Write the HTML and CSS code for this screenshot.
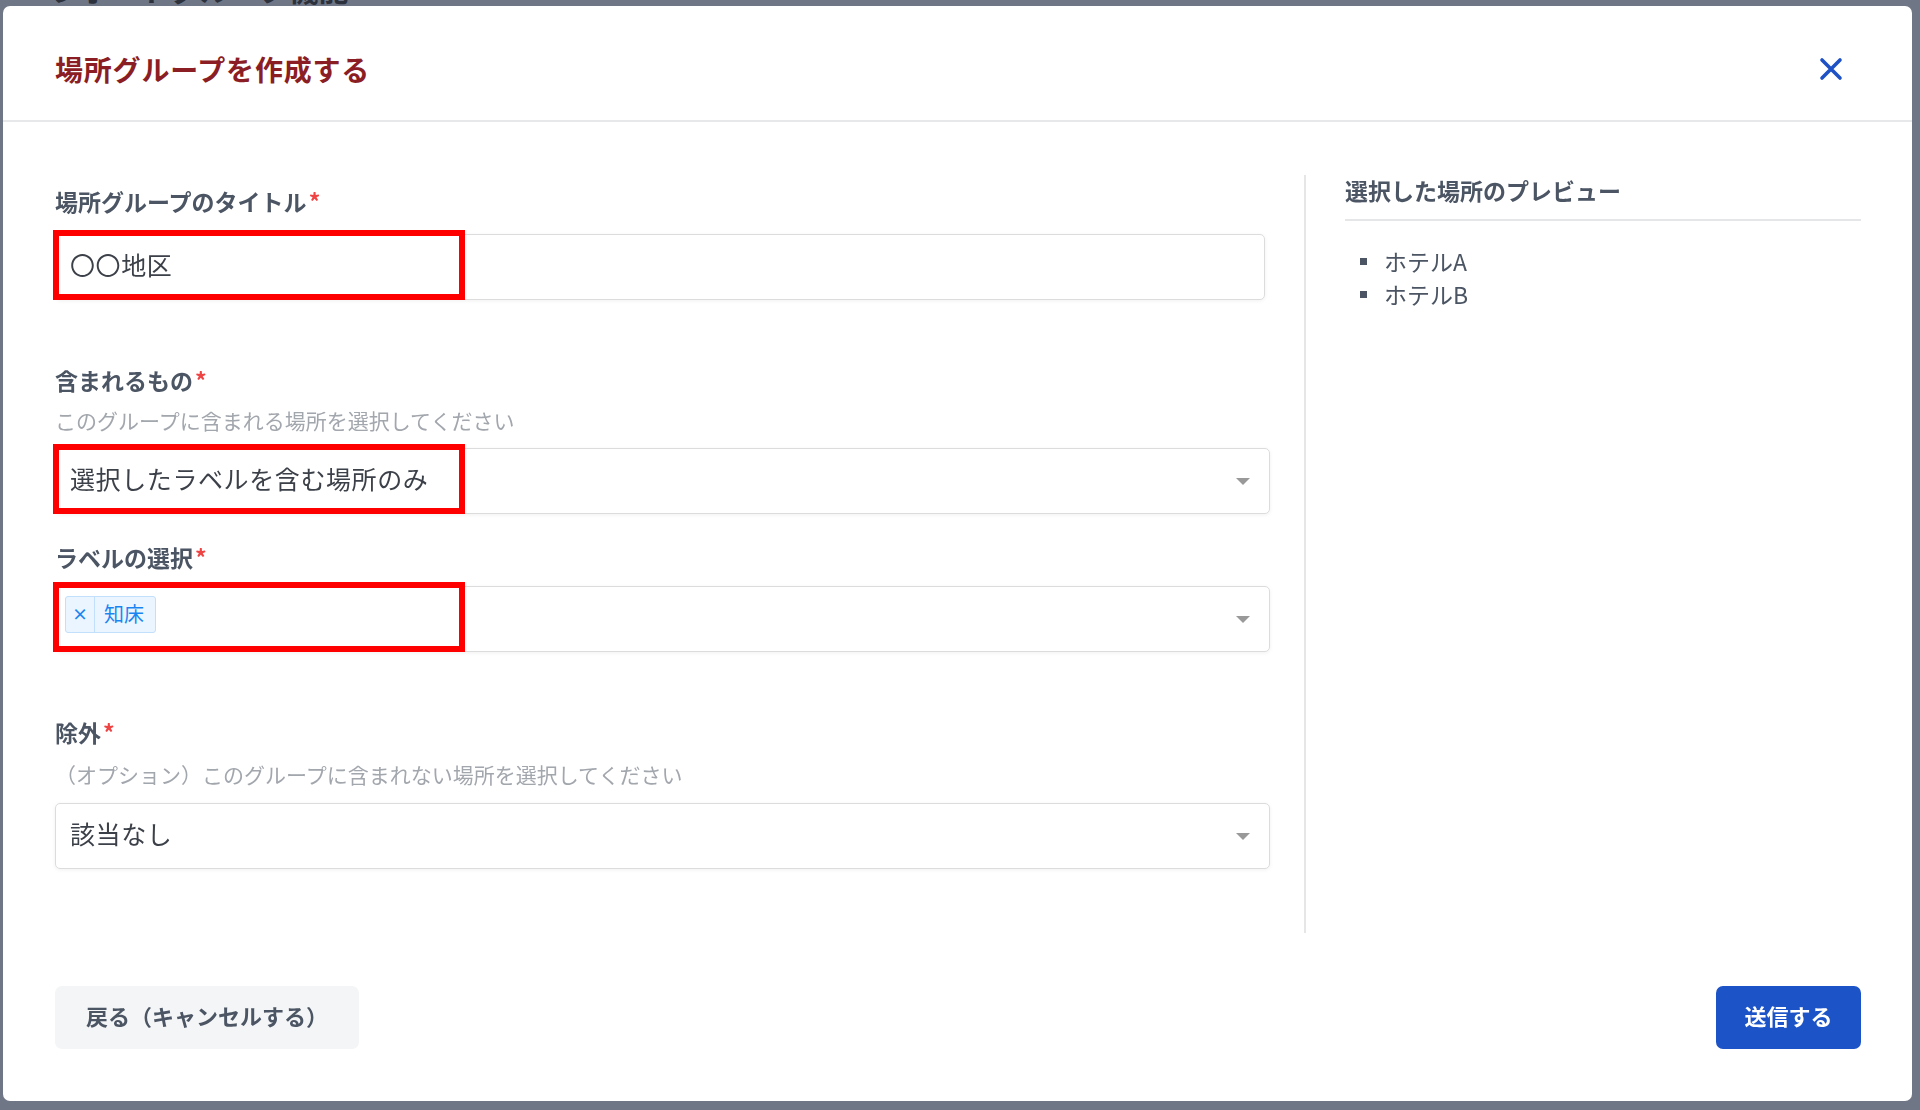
FILE: index.html
```html
<!DOCTYPE html>
<html lang="ja">
<head>
<meta charset="utf-8">
<title>場所グループを作成する</title>
<link rel="stylesheet" href="styles.css">
</head>
<body>
<div class="page">
  <div class="page-title">レポートグループ機能</div>
</div>
<div class="modal">
  <div class="modal-header">
    <h2 class="modal-title">場所グループを作成する</h2>
    <button class="close-btn" aria-label="close">
      <svg width="24" height="24" viewBox="0 0 24 24"><path d="M3 3 L21 21 M21 3 L3 21" stroke="#1e50c6" stroke-width="3.6" stroke-linecap="round" fill="none"/></svg>
    </button>
  </div>
  <div class="modal-body">
    <div class="form-col">
      <div class="field f1">
        <div class="label">場所グループのタイトル<span class="req">*</span></div>
        <div class="control input">
          <span class="value">〇〇地区</span>
          <div class="mark"></div>
        </div>
      </div>
      <div class="field f2">
        <div class="label">含まれるもの<span class="req">*</span></div>
        <div class="help">このグループに含まれる場所を選択してください</div>
        <div class="control select">
          <span class="value">選択したラベルを含む場所のみ</span>
          <span class="caret"></span>
          <div class="mark"></div>
        </div>
      </div>
      <div class="field f3">
        <div class="label">ラベルの選択<span class="req">*</span></div>
        <div class="control select multi">
          <span class="tag"><span class="tag-x">×</span><span class="tag-label">知床</span></span>
          <span class="caret"></span>
          <div class="mark"></div>
        </div>
      </div>
      <div class="field f4">
        <div class="label">除外<span class="req">*</span></div>
        <div class="help">（オプション）このグループに含まれない場所を選択してください</div>
        <div class="control select">
          <span class="value">該当なし</span>
          <span class="caret"></span>
        </div>
      </div>
    </div>
    <div class="preview-col">
      <div class="preview-title">選択した場所のプレビュー</div>
      <ul class="preview-list">
        <li><span class="sq"></span>ホテルA</li>
        <li><span class="sq"></span>ホテルB</li>
      </ul>
    </div>
  </div>
  <div class="modal-footer">
    <button class="btn btn-cancel">戻る（キャンセルする）</button>
    <button class="btn btn-submit">送信する</button>
  </div>
</div>
</body>
</html>
```
FILE: styles.css
```css
html, body {
  margin: 0;
  padding: 0;
}
body {
  width: 1920px;
  height: 1110px;
  overflow: hidden;
  background: #6f7686;
  font-family: "Noto Sans CJK JP", "Noto Sans", sans-serif;
}
.page {
  padding-left: 50px;
}
.page-title {
  margin-top: -30px;
  font-size: 30px;
  line-height: 36px;
  font-weight: bold;
  color: #2c313c;
}
.modal {
  position: fixed;
  left: 3px;
  top: 6px;
  width: 1909px;
  height: 1095px;
  background: #ffffff;
  border-radius: 7px;
  display: flex;
  flex-direction: column;
  box-sizing: border-box;
}
.modal-header {
  height: 116px;
  box-sizing: border-box;
  padding: 12px 69px 0 52px;
  border-bottom: 2px solid #e7e8ea;
  display: flex;
  align-items: center;
  justify-content: space-between;
  flex-shrink: 0;
}
.modal-title {
  margin: 0;
  font-size: 28px;
  line-height: 36px;
  font-weight: bold;
  color: #8b1d24;
  letter-spacing: 0.8px;
}
.close-btn {
  border: 0;
  background: none;
  padding: 0;
  width: 24px;
  height: 24px;
  display: flex;
}
.modal-body {
  display: flex;
  padding: 53px 51px 0 52px;
  height: 758px;
  box-sizing: content-box;
  flex-shrink: 0;
}
.form-col {
  width: 1215px;
  margin-right: 34px;
  padding-top: 11px;
  box-sizing: border-box;
}
.preview-col {
  width: 557px;
  border-left: 2px solid #e5e6e8;
  padding-left: 39px;
  box-sizing: border-box;
}
.field {
  display: flex;
  flex-direction: column;
}
.label {
  font-size: 23px;
  line-height: 30px;
  font-weight: bold;
  color: #4b5563;
}
.req {
  color: #ef4444;
  margin-left: 2px;
}
.help {
  font-size: 21px;
  line-height: 28px;
  color: #a2a6ad;
}
.control {
  position: relative;
  height: 66px;
  box-sizing: border-box;
  border: 1px solid #dcdcdc;
  border-radius: 5px;
  box-shadow: 0 1px 4px rgba(0, 0, 0, 0.06);
  display: flex;
  align-items: center;
  padding: 0 19px 0 14px;
  background: #fff;
}
.control.input {
  width: 1210px;
}
.control.select {
  width: 1215px;
  justify-content: space-between;
}
.value {
  font-size: 25px;
  line-height: 30px;
  letter-spacing: 0.6px;
  color: #3c4048;
  margin-bottom: 7px;
}
.caret {
  width: 0;
  height: 0;
  border-top: 7px solid #999999;
  border-left: 7.5px solid transparent;
  border-right: 7.5px solid transparent;
}
.f1 .label { margin-bottom: 18px; }
.f2 { margin-top: 65px; }
.f2 .help { margin-top: 11px; margin-bottom: 14px; }
.f3 { margin-top: 28px; }
.f3 .label { margin-bottom: 14px; }
.f4 { margin-top: 65px; }
.f4 .help { margin-top: 13px; margin-bottom: 15px; }
.multi {
  align-items: flex-start;
  padding-left: 9px;
}
.multi .caret {
  align-self: center;
}
.tag {
  margin-top: 9px;
  height: 37px;
  box-sizing: border-box;
  display: flex;
  align-items: stretch;
  background: #ebf5ff;
  border: 1px solid #c2dffc;
  border-radius: 3px;
  color: #1a85f0;
}
.tag-x {
  width: 28px;
  border-right: 1px solid #c2dffc;
  display: flex;
  align-items: center;
  justify-content: center;
  font-size: 16px;
  font-weight: bold;
  padding-bottom: 3px;
}
.tag-label {
  display: flex;
  align-items: center;
  padding: 0 11px 3px 9px;
  font-size: 20px;
}
.mark {
  position: absolute;
  left: -3px;
  top: -5px;
  width: 412px;
  height: 70px;
  box-sizing: border-box;
  border: 6px solid #ff0000;
  pointer-events: none;
}
.preview-title {
  font-size: 23px;
  line-height: 30px;
  font-weight: bold;
  color: #4b5563;
  padding-bottom: 14px;
  border-bottom: 2px solid #e5e6e8;
  width: 516px;
}
.preview-list {
  list-style: none;
  margin: 24px 0 0 0;
  padding: 0;
}
.preview-list li {
  display: flex;
  align-items: center;
  font-size: 23px;
  line-height: 33px;
  color: #4b5563;
}
.sq {
  width: 7px;
  height: 7px;
  background: #4b5563;
  margin-left: 15px;
  margin-right: 17px;
}
.modal-footer {
  display: flex;
  justify-content: space-between;
  padding: 53px 51px 0 52px;
}
.btn {
  height: 63px;
  border: 0;
  border-radius: 7px;
  font-family: "Noto Sans CJK JP", "Noto Sans", sans-serif;
  font-size: 22px;
  font-weight: bold;
  padding: 0 28px 5px;
}
.btn-cancel {
  width: 304px;
  background: #f4f5f6;
  color: #4b5563;
}
.btn-submit {
  width: 145px;
  background: #1c53c6;
  color: #ffffff;
}
```
